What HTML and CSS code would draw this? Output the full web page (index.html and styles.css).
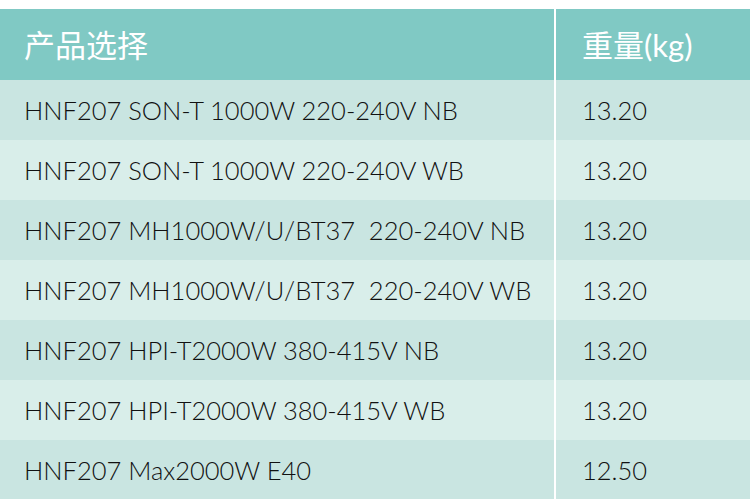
FILE: index.html
```html
<!DOCTYPE html>
<html lang="zh">
<head>
<meta charset="utf-8">
<link rel="stylesheet" href="styles.css">
</head>
<body>
<div class="table">
  <div class="row head">
    <div class="c1">产品选择</div>
    <div class="c2">重量(kg)</div>
  </div>
  <div class="row odd"><div class="c1">HNF207 SON-T 1000W 220-240V NB</div><div class="c2">13.20</div></div>
  <div class="row even"><div class="c1">HNF207 SON-T 1000W 220-240V WB</div><div class="c2">13.20</div></div>
  <div class="row odd"><div class="c1">HNF207 MH1000W/U/BT37&nbsp; 220-240V NB</div><div class="c2">13.20</div></div>
  <div class="row even"><div class="c1">HNF207 MH1000W/U/BT37&nbsp; 220-240V WB</div><div class="c2">13.20</div></div>
  <div class="row odd"><div class="c1">HNF207 HPI-T2000W 380-415V NB</div><div class="c2">13.20</div></div>
  <div class="row even"><div class="c1">HNF207 HPI-T2000W 380-415V WB</div><div class="c2">13.20</div></div>
  <div class="row odd"><div class="c1">HNF207 Max2000W E40</div><div class="c2">12.50</div></div>
</div>
</body>
</html>
```
FILE: styles.css
```css
html, body {
  margin: 0;
  padding: 0;
  background: #ffffff;
}
body {
  font-family: "Lato", "Noto Sans CJK SC", sans-serif;
  font-weight: 300;
  color: #111111;
}
.table {
  padding-top: 9px;
  display: flex;
  flex-direction: column;
}
.row {
  display: grid;
  grid-template-columns: 554px 2px 1fr;
  height: 60px;
  align-items: center;
  font-size: 25.5px;
}
.row .c1 {
  grid-column: 1;
  padding-left: 24px;
  height: 100%;
  display: flex;
  align-items: center;
}
.row .c2 {
  grid-column: 3;
  padding-left: 26px;
  height: 100%;
  display: flex;
  align-items: center;
}
.head {
  height: 71px;
  font-size: 31px;
  font-weight: 400;
  color: #ffffff;
}
.head .c1, .head .c2 { background: #80c9c4; padding-bottom: 2px; box-sizing: border-box; }
.odd .c1, .odd .c2 { background: #c9e5e1; }
.even .c1, .even .c2 { background: #d9eeea; }
```
